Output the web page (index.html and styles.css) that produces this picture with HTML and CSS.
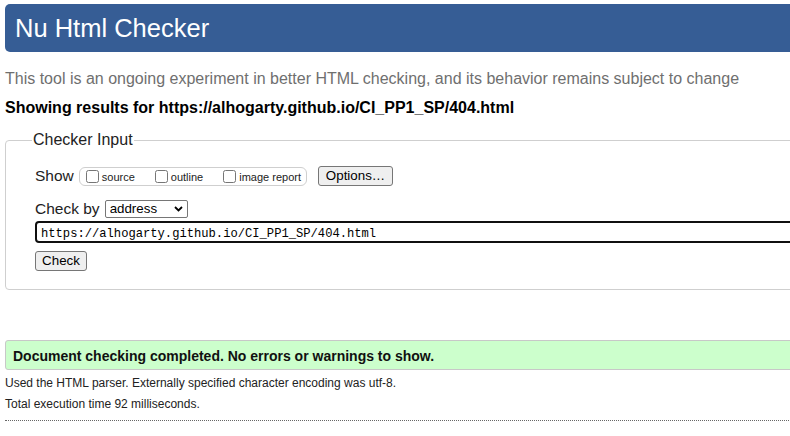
FILE: index.html
```html
<!DOCTYPE html>
<html lang="en">
<head>
<meta charset="utf-8">
<title>Nu Html Checker</title>
<link rel="stylesheet" href="styles.css">
</head>
<body>
<div class="page">
  <h1 class="title">Nu Html Checker</h1>
  <p class="about">This tool is an ongoing experiment in better HTML checking, and its behavior remains subject to change</p>
  <p class="results-for">Showing results for https://alhogarty.github.io/CI_PP1_SP/404.html</p>
  <form class="checker">
    <fieldset class="input-set">
      <legend class="legend">Checker Input</legend>
      <div class="row show-row">
        <span class="label">Show</span>
        <span class="options-group">
          <label class="opt"><input type="checkbox" class="cb"><span class="opt-text">source</span></label>
          <label class="opt"><input type="checkbox" class="cb"><span class="opt-text">outline</span></label>
          <label class="opt"><input type="checkbox" class="cb"><span class="opt-text">image report</span></label>
        </span>
        <button type="button" class="btn options-btn">Options…</button>
      </div>
      <div class="row by-row">
        <span class="label">Check by</span>
        <span class="select-wrap">
          <select class="select"><option>address</option></select>
          <svg class="chev" width="9" height="6" viewBox="0 0 9 6"><polyline points="1,1 4.5,4.5 8,1" fill="none" stroke="#000" stroke-width="1.8"/></svg>
        </span>
      </div>
      <input class="url" type="text" value="https://alhogarty.github.io/CI_PP1_SP/404.html">
      <div class="row submit-row"><button type="button" class="btn check-btn">Check</button></div>
    </fieldset>
  </form>
  <div class="success">Document checking completed. No errors or warnings to show.</div>
  <p class="meta meta-first">Used the HTML parser. Externally specified character encoding was utf-8.</p>
  <p class="meta meta-second">Total execution time 92 milliseconds.</p>
  <hr class="divider">
</div>
</body>
</html>
```
FILE: styles.css
```css
html, body {
  margin: 0;
  overflow: hidden;
  background: #fff;
}
body {
  font-family: "Liberation Sans", Arial, sans-serif;
  color: #000;
}
.page {
  width: 820px;
  padding: 4px 0 0 5px;
}
.title {
  margin: 0;
  height: 48px;
  box-sizing: border-box;
  background: #365d95;
  color: #fff;
  border-radius: 5px;
  font-weight: normal;
  font-size: 25.5px;
  line-height: 48px;
  padding-left: 10px;
}
.about {
  margin: 17px 0 0;
  font-size: 16px;
  line-height: 20px;
  color: #6f6f6f;
}
.results-for {
  margin: 9px 0 0;
  font-weight: bold;
  font-size: 16px;
  line-height: 20px;
  color: #000;
}
.checker {
  margin: 12px 0 0;
}
.input-set {
  margin: 0;
  min-width: 0;
  border: 1px solid #cfcfcf;
  border-radius: 4px;
  padding: 16px 0 18px 29px;
}
.legend {
  font-size: 16px;
  line-height: 20px;
  padding: 0 1px;
  margin-left: -3px;
  color: #222;
}
.row {
  display: flex;
  align-items: center;
}
.label {
  font-size: 15.5px;
  line-height: 20px;
  color: #222;
}
.show-row {
  height: 20px;
}
.options-group {
  display: inline-flex;
  align-items: center;
  height: 19px;
  box-sizing: border-box;
  margin-left: 5px;
  border: 1px solid #cfcfcf;
  border-radius: 6px;
  padding: 0 5px 0 6px;
}
.opt {
  display: inline-flex;
  align-items: center;
}
.opt + .opt {
  margin-left: 20px;
}
.cb {
  margin: 0 3px 0 0;
  width: 13px;
  height: 13px;
}
.opt-text {
  font-size: 11px;
  line-height: 13px;
  color: #222;
  padding-top: 2px;
}
.btn {
  font-family: "Liberation Sans", Arial, sans-serif;
  font-size: 13.33px;
  height: 20px;
  box-sizing: border-box;
  padding: 0;
  line-height: 18px;
  border: 1px solid #767676;
  border-radius: 3px;
  background: #efefef;
  color: #000;
}
.options-btn {
  width: 75px;
  margin-left: 11px;
}
.check-btn {
  width: 52px;
}
.by-row {
  margin-top: 13px;
  height: 20px;
}
.select-wrap {
  position: relative;
  display: inline-block;
  width: 83px;
  height: 18px;
  margin-left: 5px;
}
.select {
  -webkit-appearance: none;
  appearance: none;
  display: block;
  width: 100%;
  height: 18px;
  box-sizing: border-box;
  margin: 0;
  border: 1px solid #767676;
  border-radius: 2px;
  padding: 0 0 0 4px;
  font-family: "Liberation Sans", Arial, sans-serif;
  font-size: 13.33px;
  line-height: 16px;
  background: #fff;
  color: #000;
}
.chev {
  position: absolute;
  right: 5px;
  top: 6px;
}
.url {
  display: block;
  margin: 2px 0 0;
  width: 100%;
  height: 22px;
  box-sizing: border-box;
  border: 2px solid #101010;
  border-radius: 4px;
  padding: 3px 0 0 4px;
  font-family: "Liberation Mono", "Courier New", monospace;
  font-size: 12.15px;
  color: #000;
  outline: none;
  background: #fff;
}
.submit-row {
  margin-top: 8px;
}
.success {
  margin-top: 50px;
  border: 1px solid #c8c8c8;
  border-radius: 3px;
  background: #ccffcc;
  padding: 7px 7px 5px;
  font-weight: bold;
  font-size: 14px;
  line-height: 16px;
  color: #111;
}
.meta {
  font-size: 12px;
  line-height: 14px;
  color: #222;
  margin-bottom: 0;
}
.meta-first {
  margin-top: 6px;
}
.meta-second {
  margin-top: 7px;
}
.divider {
  margin: 9px 0 0;
  border: 0;
  border-top: 1px dotted #666;
  width: 784px;
  height: 0;
}
```
